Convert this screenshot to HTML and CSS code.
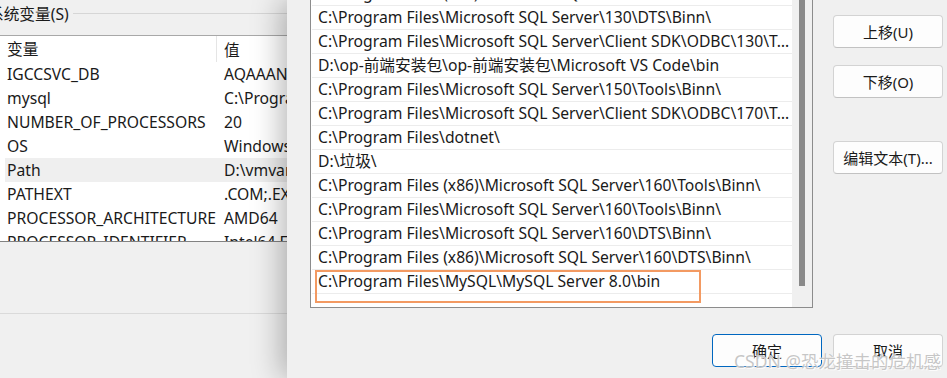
FILE: index.html
```html
<!DOCTYPE html>
<html lang="zh-CN">
<head>
  <meta charset="UTF-8">
  <meta name="viewport" content="width=device-width, initial-scale=1.0">
  <title>编辑环境变量</title>
  <link rel="stylesheet" href="styles.css">
</head>
<body>
  <div class="syspanel">
    <div class="grouphead">
      <span class="grouplabel">系统变量(S)</span>
      <span class="groupline"></span>
    </div>
    <div class="varlist">
      <div class="varrow varhead">
        <span class="cell name">变量</span>
        <span class="cell val">值</span>
      </div>
      <div class="varrow"><span class="cell name">IGCCSVC_DB</span><span class="cell val">AQAAANCMnd8BFdERjHoAwE/Cl+sBAAAA</span></div>
      <div class="varrow"><span class="cell name">mysql</span><span class="cell val">C:\Program Files\MySQL\MySQL Server 8.0\bin</span></div>
      <div class="varrow"><span class="cell name">NUMBER_OF_PROCESSORS</span><span class="cell val">20</span></div>
      <div class="varrow"><span class="cell name">OS</span><span class="cell val">Windows_NT</span></div>
      <div class="varrow selected"><span class="cell name">Path</span><span class="cell val">D:\vmvare\bin\;C:\Windows</span></div>
      <div class="varrow"><span class="cell name">PATHEXT</span><span class="cell val">.COM;.EXE;.BAT;.CMD</span></div>
      <div class="varrow"><span class="cell name">PROCESSOR_ARCHITECTURE</span><span class="cell val">AMD64</span></div>
      <div class="varrow"><span class="cell name">PROCESSOR_IDENTIFIER</span><span class="cell val">Intel64 Family 6</span></div>
    </div>
    <div class="panelrule"></div>
  </div>

  <div class="dialog">
    <div class="dialogmain">
      <div class="pathbox">
        <div class="pathrows">
          <div class="pathrow">C:\Program Files (x86)\Microsoft SQL Server\130\DTS\Binn\</div>
          <div class="pathrow">C:\Program Files\Microsoft SQL Server\130\DTS\Binn\</div>
          <div class="pathrow">C:\Program Files\Microsoft SQL Server\Client SDK\ODBC\130\Tools\Binn\</div>
          <div class="pathrow">D:\op-前端安装包\op-前端安装包\Microsoft VS Code\bin</div>
          <div class="pathrow">C:\Program Files\Microsoft SQL Server\150\Tools\Binn\</div>
          <div class="pathrow">C:\Program Files\Microsoft SQL Server\Client SDK\ODBC\170\Tools\Binn\</div>
          <div class="pathrow">C:\Program Files\dotnet\</div>
          <div class="pathrow">D:\垃圾\</div>
          <div class="pathrow">C:\Program Files (x86)\Microsoft SQL Server\160\Tools\Binn\</div>
          <div class="pathrow">C:\Program Files\Microsoft SQL Server\160\Tools\Binn\</div>
          <div class="pathrow">C:\Program Files\Microsoft SQL Server\160\DTS\Binn\</div>
          <div class="pathrow">C:\Program Files (x86)\Microsoft SQL Server\160\DTS\Binn\</div>
          <div class="pathrow marked">C:\Program Files\MySQL\MySQL Server 8.0\bin<span class="markbox"></span></div>
        </div>
        <div class="scrolltrack"><div class="scrollthumb"></div></div>
      </div>
      <div class="sidebtns">
        <button class="btn">上移(U)</button>
        <button class="btn">下移(O)</button>
        <button class="btn editbtn">编辑文本(T)...</button>
      </div>
    </div>
    <div class="dialogfoot">
      <button class="btn primary">确定</button>
      <button class="btn">取消</button>
    </div>
    <div class="watermark">CSDN @恐龙撞击的危机感</div>
  </div>
</body>
</html>
```

FILE: styles.css
```css
*{
  margin:0;
  padding:0;
  box-sizing:border-box;
}
body{
  width:947px;
  height:378px;
  overflow:hidden;
  display:flex;
  background-color:#f0f0f0;
  font-family:"Noto Sans","Noto Sans CJK SC",sans-serif;
  font-size:15.7px;
  color:#1a1a1a;
}

/* left: system variables */
.syspanel{
  width:287px;
  flex:none;
  overflow:hidden;
}
.grouphead{
  height:35px;
  display:flex;
  align-items:center;
  padding-bottom:9px;
}
.grouplabel{
  margin-left:-12px;
  white-space:nowrap;
}
.groupline{
  flex:1;
  height:1px;
  margin-left:4px;
  background-color:#d6d6d6;
}
.varlist{
  height:207px;
  width:320px;
  background-color:#fff;
  border-top:1px solid #a8a8a8;
  border-bottom:1px solid #828282;
  overflow:hidden;
}
.varrow{
  display:flex;
  height:24px;
  align-items:center;
  margin-left:5px;
  white-space:nowrap;
}
.varhead{
  height:26px;
}
.varhead .name{
  border-right:1px solid #e5e5e5;
  height:26px;
  line-height:26px;
}
.cell{
  overflow:hidden;
}
.name{
  flex:none;
  width:212px;
  padding-left:2px;
}
.val{
  flex:none;
  padding-left:7px;
}
.selected{
  background-color:#efefef;
}
.panelrule{
  height:1px;
  margin-top:71px;
  background-color:#dadada;
}

/* right: edit dialog */
.dialog{
  flex:1;
  position:relative;
  z-index:1;
  padding-left:23px;
  padding-right:4px;
  background-color:#f0f0f0;
  box-shadow:-6px 0 28px rgba(0,0,0,0.28);
}
.dialogmain{
  display:flex;
  align-items:flex-start;
  gap:20px;
}
.pathbox{
  flex:none;
  width:503px;
  height:327px;
  margin-top:-19px;
  display:flex;
  background-color:#fff;
  border:1px solid #8c8c8c;
}
.pathrows{
  flex:1;
  min-width:0;
  padding-left:1px;
}
.pathrow{
  position:relative;
  height:24px;
  line-height:23px;
  padding-left:6px;
  padding-right:1px;
  border-bottom:1px solid #ececec;
  white-space:nowrap;
  overflow:hidden;
  text-overflow:ellipsis;
}
.marked{
  overflow:visible;
}
.markbox{
  position:absolute;
  left:3px;
  top:0;
  width:386px;
  height:33px;
  border:2px solid #f39a62;
  pointer-events:none;
}
.scrolltrack{
  flex:none;
  width:20px;
  background-color:#f0f0f0;
  display:flex;
  justify-content:center;
}
.scrollthumb{
  width:6px;
  height:304px;
  background-color:#8a8a8a;
}

.sidebtns{
  display:flex;
  flex-direction:column;
  padding-top:15px;
  gap:17px;
}
.editbtn{
  margin-top:26px;
}
.btn{
  width:110px;
  height:33px;
  font-family:inherit;
  font-size:15px;
  color:#1a1a1a;
  background-color:#fdfdfd;
  border:1px solid #d3d3d3;
  border-bottom-color:#c2c2c2;
  border-radius:4px;
}
.primary{
  border:1px solid #0067c0;
}
.dialogfoot{
  display:flex;
  justify-content:flex-end;
  gap:11px;
  margin-top:26px;
}
.watermark{
  position:absolute;
  right:6px;
  bottom:5px;
  font-size:17.5px;
  color:rgba(180,180,180,0.75);
  text-shadow:0 0 1px #fff, 1px 1px 0 rgba(255,255,255,0.8);
  white-space:nowrap;
  pointer-events:none;
}
```
